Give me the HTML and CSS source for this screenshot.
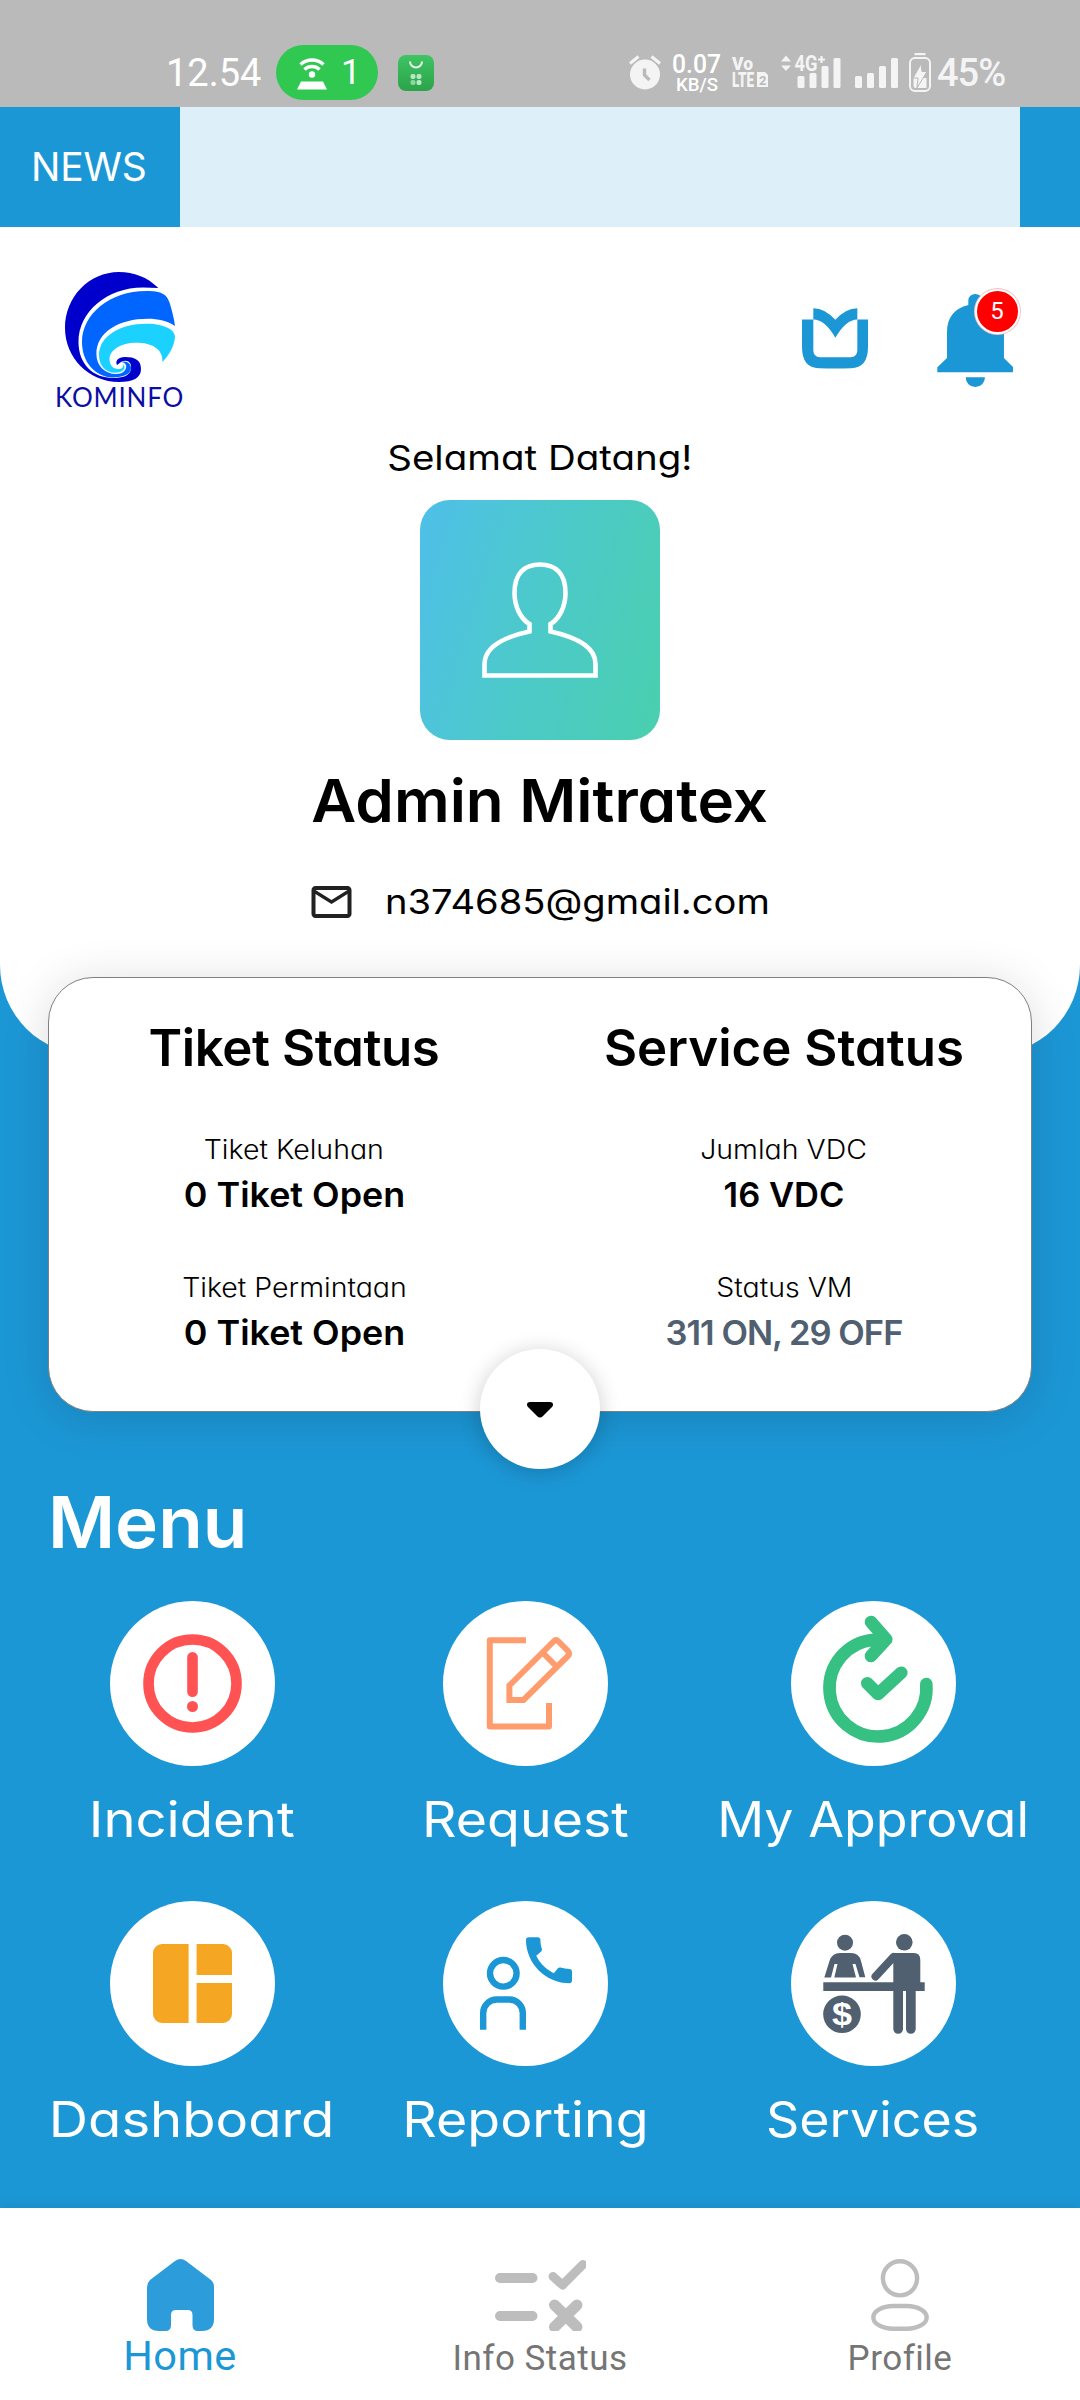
FILE: index.html
```html
<!DOCTYPE html>
<html lang="id">
<head>
<meta charset="utf-8">
<title>Kominfo</title>
<link rel="stylesheet" href="styles.css">
</head>
<body>
<div class="phone">
  <div class="statusbar">
    <span class="clock">12.54</span>
    <span class="hotspot">
      <svg class="hotspot-icon" viewBox="0 0 30 34" width="30" height="34">
        <path d="M3.500 8.500A17 17 0 0 1 26.500 8.500M7.500 13.500A11 11 0 0 1 22.500 13.500" fill="none" stroke="#fff" stroke-width="3.400"/>
        <circle cx="15" cy="18.500" r="3.200" fill="#fff"/>
        <path d="M4 25.500H26L30 33.500H0Z" fill="#fff"/>
      </svg>
      <span class="hotspot-count">1</span>
    </span>
    <svg class="store" viewBox="0 0 36 36" width="36" height="36">
      <defs><linearGradient id="st" x1="0" y1="0" x2="0" y2="1"><stop offset="0" stop-color="#3fc463"/><stop offset="1" stop-color="#2ba34a"/></linearGradient></defs>
      <rect width="36" height="36" rx="8" fill="url(#st)"/>
      <path d="M12 6.500a6 6 0 0 0 12 0" fill="none" stroke="#e8f8ec" stroke-width="2"/>
      <g fill="#b9e8c5"><rect x="12.500" y="19" width="5" height="5" rx="2"/><rect x="18.500" y="19" width="5" height="5" rx="2"/><rect x="12.500" y="25" width="5" height="5" rx="2" opacity=".7"/><rect x="18.500" y="25" width="5" height="5" rx="2"/></g>
    </svg>
    <svg class="alarm" viewBox="0 0 32 35" width="32" height="35">
      <path d="M1 8.500L9.500 1.500M31 8.500L22.500 1.500" stroke="#f4f4f4" stroke-width="3"/>
      <circle cx="16" cy="19.500" r="15" fill="#f4f4f4"/>
      <path d="M15.500 13.500V20L20.500 25" fill="none" stroke="#bababa" stroke-width="3.400"/>
    </svg>
    <svg class="speed" viewBox="0 0 50 44" width="50" height="44" font-family="Roboto, sans-serif" font-weight="500" fill="#fff">
      <text x="0" y="22" font-size="25" textLength="49" lengthAdjust="spacingAndGlyphs">0.07</text>
      <text x="4" y="39.500" font-size="18.500" textLength="42" lengthAdjust="spacingAndGlyphs">KB/S</text>
    </svg>
    <svg class="volte" viewBox="0 0 38 34" width="38" height="34">
      <g font-family="Roboto, sans-serif" font-weight="900" fill="#f4f4f4">
        <text x="0" y="15" font-size="19" textLength="21" lengthAdjust="spacingAndGlyphs">Vo</text>
        <text x="0" y="31.500" font-size="19.500" textLength="22" lengthAdjust="spacingAndGlyphs">LTE</text>
      </g>
      <path d="M25 17H33L36 20V32H25Z" fill="#f4f4f4"/>
      <text x="27" y="29.500" font-family="Roboto, sans-serif" font-weight="700" font-size="13" fill="#bababa">2</text>
    </svg>
    <svg class="signal" viewBox="0 0 118 34" width="118" height="34">
      <g fill="#f4f4f4">
        <path d="M1 6.500L6 .5L11 6.500ZM1 10.500L6 16L11 10.500Z"/>
        <text x="14.500" y="16" font-family="Roboto, sans-serif" font-weight="700" font-size="21.500" textLength="23" lengthAdjust="spacingAndGlyphs">4G</text>
        <path d="M38 4.500H45M41.500 1V8" stroke="#f4f4f4" stroke-width="2.200"/>
        <rect x="17.500" y="21" width="7" height="12" rx="1.500"/><rect x="29.500" y="18" width="7" height="15" rx="1.500"/><rect x="41.500" y="11" width="7" height="22" rx="1.500"/><rect x="53.500" y="3" width="7" height="30" rx="1.500"/>
        <rect x="75" y="21" width="7" height="12" rx="1.500"/><rect x="87" y="18" width="7" height="15" rx="1.500"/><rect x="99" y="11" width="7" height="22" rx="1.500"/><rect x="111" y="3" width="7" height="30" rx="1.500"/>
      </g>
    </svg>
    <svg class="battery" viewBox="0 0 22 39" width="22" height="39">
      <path d="M5.500 1H16.500" stroke="#f4f4f4" stroke-width="2.400"/>
      <rect x="1" y="5" width="20" height="33" rx="5" fill="none" stroke="#f4f4f4" stroke-width="2"/>
      <path d="M4.500 25H17.500V35H6.500Q4.500 35 4.500 33Z" fill="#f4f4f4"/>
      <path d="M12 11L4 25H9L8 35L18 18.500H13Z" fill="#f4f4f4" stroke="#bababa" stroke-width="1"/>
    </svg>
    <span class="percent">45%</span>
  </div>

  <div class="ticker"><span class="ticker-label">NEWS</span><div class="ticker-body"></div></div>

  <main class="content">
    <section class="profile">
      <header class="topbar">
        <div class="brand">
          <svg viewBox="0 0 110 110" width="110" height="110">
            <path fill="#00c" d="M93.400 16C82 5 69 0 54 0C24 0 0 25 0 56C0 86 24 110 54 110C68 110 76 106 76 97C76 88 70 85 60 85C53 85 50 89 52 93L56 90C62 87 67 90 66 97C65 104 57 106 48 106C28 106 13.500 92 13.500 70C13.500 40 42 15.500 78 15.500Z"/>
            <path fill="#06f" d="M93 20C101 22 103 26 105 32C107 39 109 46 110 54C103 49 93 46.700 83 46.700C54 46.700 31.400 60 31.400 82C31.400 94 40 102 51 102C59 102 62 97 61 93C60 91 58 90 56 90C62 88 66 92 66 96C66 102 58 105.500 48 105.500C30 105 17 90 17 70C17 42 45 19 81 19C86 19 90 19 93 20Z"/>
            <path fill="#1ad1ff" d="M83 51.700C96 52 110 56 110 65C109 75 104 83 97.500 90C98 76 86 70.700 71 70.700C56 70.700 44.500 78 44.500 87C44.500 93 48 97 53 97C57 97 59 95 58 92C62 96 58 100.700 50 100.700C41 100.700 34 94 34 83C34 64 56 51 83 51.700Z"/>
          </svg>
          <span class="brand-name">KOMINFO</span>
        </div>
        <div class="actions">
          <svg viewBox="183 174 198 182" width="66" height="61" fill="#1c97d6">
            <path d="M183 208H217V300Q217 320 237 321Q283 322 329 321Q349 320 349 300V208H381V290Q381 354 330 354Q283 356 234 354Q183 354 183 290Z"/>
            <path d="M217 174Q252 174 283 209Q314 174 349 174V208Q315 208 283 263Q252 208 217 208Z"/>
          </svg>
          <div class="bell">
            <svg viewBox="590 131 229 280" width="76.300" height="93.300" fill="#1c97d6">
              <path d="M684 164V150A21 19 0 0 1 726 150V164Q791 185 791 245V323L819 351V366H591V351L620 323V245Q620 180 684 164ZM676 381H734A29 29 0 0 1 676 381Z"/>
            </svg>
            <span class="badge">5</span>
          </div>
        </div>
      </header>
      <p class="greeting">Selamat Datang!</p>
      <div class="avatar">
        <svg viewBox="0 0 240 240" width="240" height="240">
          <path fill="none" stroke="#fff" stroke-width="4.600" d="M109.500 124V131.500C84 137 64.500 146 64.500 164V175.500H175.500V164C175.500 146 156 137 130.500 131.500V124C139 119 145.500 107 145.500 93C145.500 74 136 64.500 120 64.500C104 64.500 94.500 74 94.500 93C94.500 107 101 119 109.500 124Z"/>
        </svg>
      </div>
      <h1 class="name">Admin Mitratex</h1>
      <div class="email">
        <svg viewBox="2 4 20 16" width="41" height="32" fill="#212121"><path d="M22 6c0-1.100-.9-2-2-2H4c-1.100 0-2 .9-2 2v12c0 1.100.9 2 2 2h16c1.100 0 2-.9 2-2V6zm-2 0l-8 5-8-5h16zm0 12H4V8l8 5 8-5v10z"/></svg>
        <span class="address">n374685@gmail.com</span>
      </div>
    </section>

    <section class="card">
      <div class="col tickets">
        <h2>Tiket Status</h2>
        <span class="label">Tiket Keluhan</span><span class="value">0 Tiket Open</span>
        <span class="label">Tiket Permintaan</span><span class="value">0 Tiket Open</span>
      </div>
      <div class="col services">
        <h2>Service Status</h2>
        <span class="label">Jumlah VDC</span><span class="value">16 VDC</span>
        <span class="label">Status VM</span><span class="value muted">311 ON, 29 OFF</span>
      </div>
      <button class="expand" aria-label="Buka">
        <svg viewBox="0 0 26 16" width="26" height="16"><path d="M3 0H23Q26 0 26 2.500Q26 4 25 5L16 14Q13 17 10 14L1 5Q0 4 0 2.500Q0 0 3 0Z"/></svg>
      </button>
    </section>

    <section class="menu">
      <h2 class="menu-title">Menu</h2>
      <div class="grid">
        <div class="item wide"><span class="disc"><svg viewBox="0 0 165 165"><circle cx="82.500" cy="82.500" r="44" fill="none" stroke="#ff5252" stroke-width="10.600"/><rect x="77.200" y="51" width="10.600" height="45" rx="5.300" fill="#ff5252"/><circle cx="82.500" cy="105.500" r="5.500" fill="#ff5252"/></svg></span><span class="caption">Incident</span></div>
        <div class="item"><span class="disc"><svg viewBox="0 0 165 165" fill="none" stroke="#ff9c6e" stroke-width="6" stroke-linejoin="round"><path d="M83 39.300H46.800V125.600H106V102"/><path stroke-linejoin="miter" d="M66.400 99V84.500L110.500 40.500Q113 38 115.500 40.500L125 50Q127 52.500 125 55L80.500 99ZM100 52L113 65"/></svg></span><span class="caption">Request</span></div>
        <div class="item tight"><span class="disc"><svg viewBox="0 0 165 165" fill="none" stroke="#36c082" stroke-width="12.600" stroke-linecap="round" stroke-linejoin="round"><path d="M135.300 83A48.500 48.500 0 1 1 83 38.700L94 38.300M80 21L95.300 38.300L80 55M76.300 82.300L87 93L110.300 71.700"/></svg></span><span class="caption">My Approval</span></div>
        <div class="item wide"><span class="disc"><svg viewBox="0 0 165 165" fill="#f5a623"><path d="M52 43H78.600V122H52A9 9 0 0 1 43 113V52A9 9 0 0 1 52 43ZM86.600 43H113A9 9 0 0 1 122 52V74H86.600ZM86.600 82H122V113A9 9 0 0 1 113 122H86.600Z"/></svg></span><span class="caption">Dashboard</span></div>
        <div class="item"><span class="disc"><svg viewBox="0 0 165 165" fill="none" stroke="#1c97d6" stroke-width="6.400"><circle cx="60.300" cy="72.300" r="13.300"/><path d="M40.200 128.700V112A13.500 13.500 0 0 1 53.700 98.500H66.300A13.500 13.500 0 0 1 79.800 112V128.700"/><path fill="#1c97d6" stroke="none" transform="translate(75.300 28.600) scale(2.560)" d="M20.010 15.380c-1.230 0-2.420-.2-3.530-.56-.35-.12-.74-.03-1.010.24l-1.570 1.970c-2.830-1.350-5.480-3.900-6.890-6.830l1.950-1.660c.27-.28.35-.67.24-1.020-.37-1.110-.56-2.300-.56-3.530 0-.54-.45-.99-.99-.99H4.190C3.650 3 3 3.240 3 3.990 3 13.280 10.730 21 20.010 21c.71 0 .99-.63.99-1.180v-3.450c0-.54-.45-.99-.99-.99z"/></svg></span><span class="caption">Reporting</span></div>
        <div class="item tight"><span class="disc"><svg viewBox="0 0 165 165" fill="#506070"><circle cx="54" cy="41.700" r="8"/><path d="M33.300 76.500L38.500 60Q41 52 49 52H60Q68 52 70 60L74.300 76.300H68.500L64.500 63H61.500L65 76.500H43.300L46.500 63H43.500L40 76.500ZM32.300 81.300H133.700V90H32.300Z"/><circle cx="113.300" cy="41.300" r="8.300"/><path d="M102.300 52H123Q129.300 52 129.300 59V90H124.700V128A4.850 4.850 0 0 1 115 128V90H112V128A4.850 4.850 0 0 1 102.300 128V60Z"/><path d="M84.500 75.500L102.500 56" stroke="#506070" stroke-width="8" stroke-linecap="round"/><circle cx="51" cy="113.300" r="18.800"/><text x="51" y="124" fill="#fff" text-anchor="middle" font-family="Liberation Sans, sans-serif" font-weight="700" font-size="32" textLength="20" lengthAdjust="spacingAndGlyphs">$</text></svg></span><span class="caption">Services</span></div>
      </div>
    </section>
  </main>

  <nav class="nav">
    <div class="tab active">
      <svg viewBox="0 0 67 72" width="67" height="72" fill="#2d9cdb"><path d="M28 2Q33.500-2 39 2L64 21Q67 23.500 67 28V60Q67 72 55 72H51Q45.500 72 45.500 66V56Q45.500 51 40.500 51H29Q24 51 24 56V66Q24 72 18.500 72H12Q0 72 0 60V28Q0 24 3 21Z"/></svg>
      <span>Home</span>
    </div>
    <div class="tab">
      <svg viewBox="-1 -2 92 72" width="92" height="72" fill="none" stroke="#bdbdbd" stroke-linecap="round" stroke-linejoin="round"><path stroke-width="10" d="M5 17H37.500M5 55H37.500"/><path stroke-width="9" d="M58 15.500L67.500 24L88 3.500"/><path stroke-width="11" d="M59.500 44L82 66M82 44L59.500 66"/></svg>
      <span>Info Status</span>
    </div>
    <div class="tab">
      <svg viewBox="0 0 58 72" width="58" height="72" fill="none" stroke="#bdbdbd" stroke-width="4.400"><circle cx="29" cy="19.300" r="17.100"/><rect x="2.300" y="47" width="53.400" height="22.800" rx="20" ry="11.400"/></svg>
      <span>Profile</span>
    </div>
  </nav>
</div>
</body>
</html>
```
FILE: styles.css
```css
* { box-sizing: border-box; margin: 0; padding: 0; }
body { width: 1080px; font-family: Inter, "Open Sans", sans-serif; font-feature-settings: "cv11"; color: #000; background: #1c97d6; }
svg { display: block; flex: none; }
.phone { width: 1080px; height: 2400px; display: flex; flex-direction: column; overflow: hidden; }

.statusbar { height: 107px; background: #bababa; padding: 45px 0 0 166px; display: flex; align-items: flex-start; color: #fff; font-family: Roboto, sans-serif; }
.clock { width: 110px; font-size: 38px; line-height: 57px; font-weight: 400; }
.hotspot { width: 102px; height: 55px; border-radius: 28px; background: #30c850; display: flex; align-items: center; padding-left: 21px; gap: 14px; }
.hotspot-count { font-size: 35px; line-height: 57px; }
.store { margin: 10px 195px 0 20px; }
.alarm { margin: 10px 11px 0 0; }
.speed { margin: 6px 10px 0 0; overflow: visible; }
.volte { margin: 10px 10px 0 0; overflow: visible; }
.signal { margin: 10px 11px 0 0; overflow: visible; }
.battery { margin: 8px 6px 0 0; }
.percent { font-size: 38px; line-height: 57px; letter-spacing: -1px; font-weight: 500; color: #f4f4f4; }

.ticker { height: 120px; display: flex; padding-right: 60px; background: #1c97d6; }
.ticker-label { width: 180px; padding-left: 31px; font-size: 39px; line-height: 120px; letter-spacing: -.2px; color: #fff; }
.ticker-body { flex: 1; background: #ddeff9; }

.content { flex: 1; }
.profile { height: 828px; background: #fff; border-radius: 0 0 90px 90px; display: flex; flex-direction: column; align-items: center; }
.topbar { width: 100%; height: 203px; padding: 45px 60px 0 57px; display: flex; justify-content: space-between; }
.brand { display: flex; flex-direction: column; }
.brand svg { margin-left: 8px; }
.brand-name { margin-left: -2px; font-family: Lato, sans-serif; font-size: 26px; line-height: 31px; letter-spacing: .8px; color: #0d0da6; }
.actions { display: flex; gap: 69px; }
.actions > svg { margin-top: 36px; }
.bell { position: relative; width: 83px; padding-top: 22px; }
.badge { position: absolute; left: 37.500px; top: 17px; width: 45px; height: 45px; border-radius: 50%; background: #f00; border: 2.500px solid #fff; box-shadow: 0 0 0 1px #f3c4c4; color: #fff; font: 24px/40px Roboto, sans-serif; text-align: center; }
.greeting { font-size: 34.500px; line-height: 55px; transform: scaleX(1.115); }
.avatar { margin-top: 15px; width: 240px; height: 240px; border-radius: 30px; background: linear-gradient(107deg, #4fbfe9, #4cc9cc 45%, #4acfae); }
.name { margin-top: 30px; font-size: 59.500px; line-height: 60px; font-weight: 600; transform: scaleX(1.040); }
.email { margin-top: 47px; height: 50px; display: flex; align-items: center; gap: 33px; font-size: 34.500px; line-height: 50px; }
.address { margin-right: 36px; transform: scaleX(1.105); transform-origin: left; }

.card { position: relative; margin: -78px 48px 0; height: 435px; background: #fff; border: 1px solid #808080; border-radius: 45px; box-shadow: 0 6px 48px rgba(0,0,0,.14); display: grid; grid-template-columns: 1fr 1fr; padding: 40px 2px 0 0; }
.col { display: flex; flex-direction: column; align-items: center; }
.col h2 { font-size: 51px; line-height: 60px; font-weight: 600; margin-bottom: 51px; }
.tickets h2 { letter-spacing: -.4px; }
.label { font-size: 26.500px; line-height: 40px; font-weight: 300; transform: scaleX(1.075); }
.value { font-size: 34.500px; line-height: 52px; font-weight: 600; margin-bottom: 46px; transform: scaleX(1.040); }
.services .value { transform: none; }
.services .muted { color: #506070; letter-spacing: -1px; }
.expand { position: absolute; left: 431px; bottom: -58px; width: 120px; height: 120px; border: 0; border-radius: 50%; background: #fff; box-shadow: 0 3px 22px rgba(0,0,0,.2); display: flex; align-items: center; justify-content: center; }
.expand svg { margin-top: 2px; }

.menu { padding: 70px 48px 0; color: #fff; }
.menu-title { font-size: 71px; line-height: 80px; font-weight: 600; transform: scaleX(1.025); transform-origin: left; }
.grid { margin-top: 39px; display: grid; grid-template-columns: 288px 250px 318px; justify-content: space-between; row-gap: 30px; }
.item { display: flex; flex-direction: column; align-items: center; height: 270px; font-size: 49px; line-height: 70px; white-space: nowrap; }
.caption { transform: scaleX(1.095); }
.wide .caption { transform: scaleX(1.110); }
.tight .caption { transform: scaleX(1.060); }
.disc { width: 165px; height: 165px; border-radius: 50%; background: #fff; margin-bottom: 19px; }

.nav { height: 192px; background: #fff; display: grid; grid-template-columns: repeat(3, 1fr); padding-top: 51px; box-shadow: 0 -2px 10px rgba(0,0,0,.08); font-family: Roboto, sans-serif; }
.tab { display: flex; flex-direction: column; align-items: center; font-size: 35px; line-height: 56px; letter-spacing: .5px; color: #757575; }
.active { font-size: 41.500px; line-height: 49px; color: #1c97d6; }
```
